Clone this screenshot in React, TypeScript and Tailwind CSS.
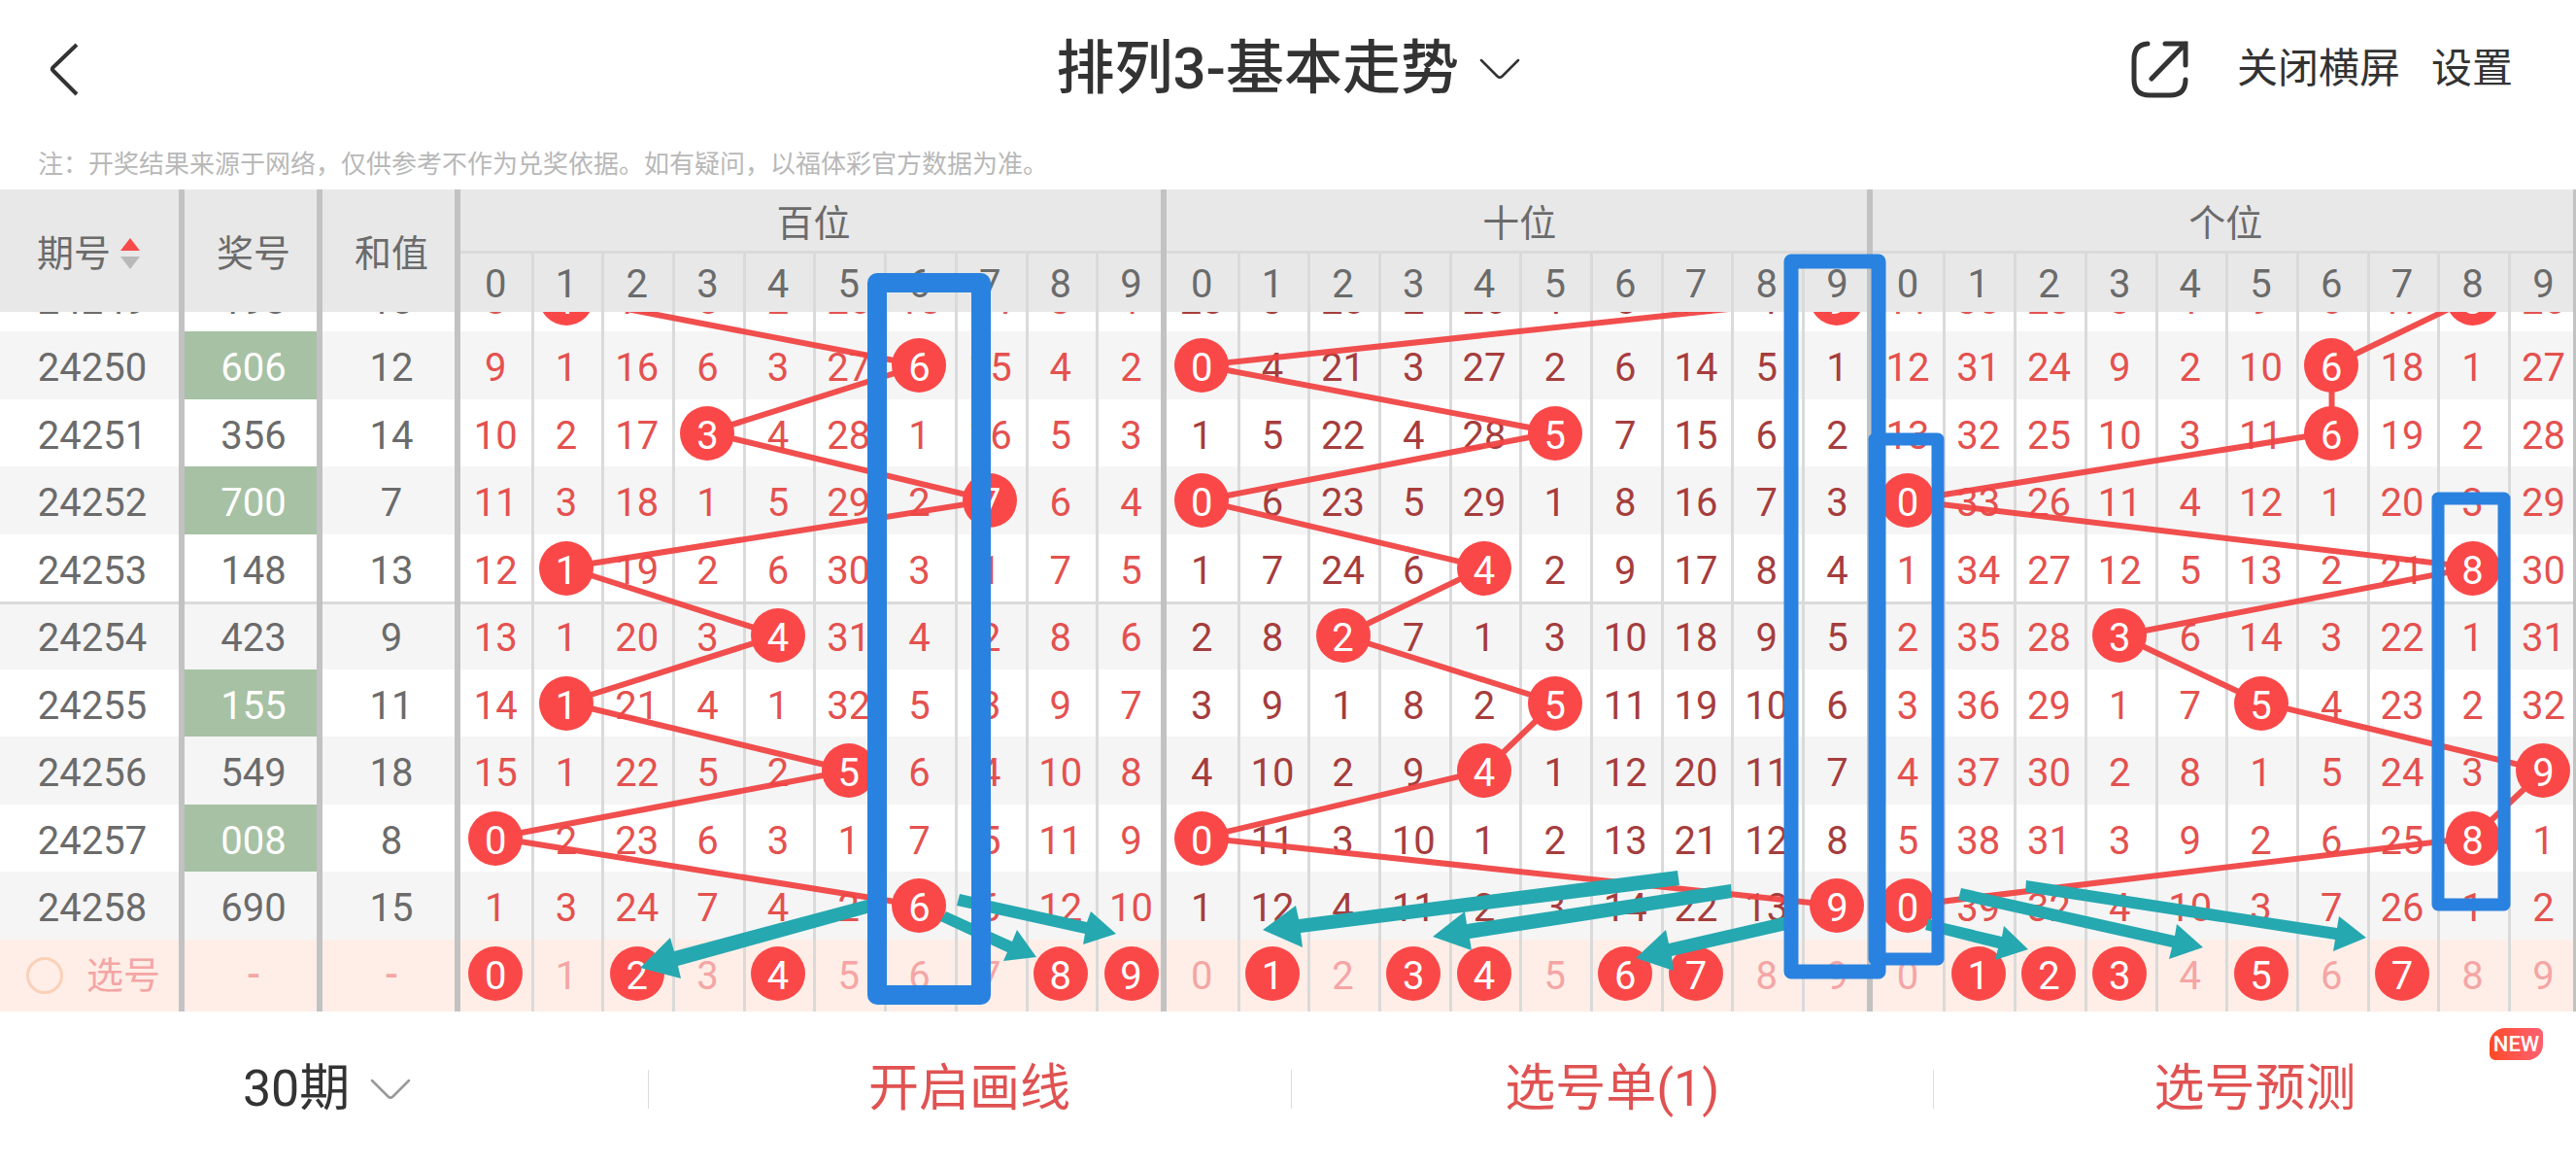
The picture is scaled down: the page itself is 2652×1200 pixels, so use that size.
import { Fragment } from 'react';

type Group = { name: string; tone: string; start: number[]; picks: number[] };
type Draw = { issue: string; num: string };

const DIGITS = [0, 1, 2, 3, 4, 5, 6, 7, 8, 9];

// start = miss counters on the first visible draw
const GROUPS: Group[] = [
  { name: '百位', tone: 'text-[#e4514f]', start: [8, 0, 15, 5, 2, 26, 18, 14, 3, 1], picks: [0, 2, 4, 8, 9] },
  { name: '十位', tone: 'text-[#a63d3d]', start: [28, 3, 20, 2, 26, 1, 5, 13, 4, 0], picks: [1, 3, 4, 6, 7] },
  { name: '个位', tone: 'text-[#e4514f]', start: [11, 30, 23, 8, 1, 9, 6, 17, 0, 26], picks: [1, 2, 3, 5, 7] },
];

const DRAWS: Draw[] = [
  { issue: '24249', num: '198' },
  { issue: '24250', num: '606' },
  { issue: '24251', num: '356' },
  { issue: '24252', num: '700' },
  { issue: '24253', num: '148' },
  { issue: '24254', num: '423' },
  { issue: '24255', num: '155' },
  { issue: '24256', num: '549' },
  { issue: '24257', num: '008' },
  { issue: '24258', num: '690' },
];

// rows alternate 69px / 70px
const ROW_CENTERS = DRAWS.map((_, i) => Math.floor(i / 2) * 139 + (i % 2 ? 69 + 35 : 34));

const ARROWS = [
  '659,996 690,965 694,979 900,924 900,938 698,994 701,1007',
  '1067,985 1047,957 1042,969 974,938 968,948 1037,980 1033,989',
  '1149,961 1123,938 1119,949 988,920 985,932 1117,961 1115,972',
  '1300,957 1334,932 1337,946 1727,896 1729,911 1339,960 1341,975',
  '1475,964 1508,938 1510,951 1782,910 1783,924 1513,966 1515,978',
  '1684,986 1715,957 1718,971 1844,942 1844,956 1721,984 1723,999',
  '2088,977 2063,953 2061,964 1985,946 1982,957 2057,976 2054,988',
  '2268,975 2241,951 2239,963 2019,914 2016,926 2236,975 2233,987',
  '2436,965 2408,943 2406,955 2086,906 2085,918 2404,967 2402,979',
];

const BOXES = [
  { x: 903, y: 291, w: 107, h: 733, s: 20 },
  { x: 1844, y: 269, w: 90, h: 731, s: 15 },
  { x: 1930, y: 452, w: 65, h: 535, s: 13 },
  { x: 2510, y: 513, w: 68, h: 418, s: 13 },
];

const sum = (num: string) => num.split('').reduce((a, b) => a + Number(b), 0);
const hasPair = (num: string) => new Set(num).size < 3;

function missAt(g: number, row: number, digit: number) {
  let miss = GROUPS[g].start[digit];
  for (let i = 0; i <= row; i++) {
    if (Number(DRAWS[i].num[g]) === digit) miss = 0;
    else if (i > 0) miss += 1;
  }
  return miss;
}

function cellLine(digit: number, ruled: boolean) {
  if (ruled) {
    if (digit === 0) return 'shadow-[inset_0_3px_0_#dadada]';
    if (digit === 9) return 'shadow-[inset_-6px_0_0_#c2c2c2,inset_3px_0_0_#dadada,inset_0_3px_0_#dadada]';
    return 'shadow-[inset_3px_0_0_#dadada,inset_0_3px_0_#dadada]';
  }
  if (digit === 0) return '';
  if (digit === 9) return 'shadow-[inset_-6px_0_0_#c2c2c2,inset_3px_0_0_#dadada]';
  return 'shadow-[inset_3px_0_0_#dadada]';
}

function Cols() {
  return (
    <colgroup>
      <col className="w-[190px]" />
      <col className="w-[142px]" />
      <col className="w-[142px]" />
      {GROUPS.map((g) => DIGITS.map((d) => <col key={g.name + d} />))}
    </colgroup>
  );
}

function Chevron({ className }: { className: string }) {
  return (
    <svg viewBox="0 0 42 22" className={`pointer-events-none h-[22px] w-[42px] ${className}`} fill="none" stroke="currentColor">
      <path d="M2 2 L18.5 18.5 Q21 21 23.5 18.5 L40 2" strokeWidth="2.5" strokeLinecap="round" />
    </svg>
  );
}

function TopBar() {
  return (
    <header className="grid h-[142px] grid-cols-[1fr_auto_1fr] items-center">
      <button aria-label="返回" className="ml-[48px] w-fit">
        <svg viewBox="0 0 34 56" className="h-[56px] w-[34px]" fill="none" stroke="#333" strokeWidth="4">
          <path d="M31 3 L6.500 26.500 Q5 28 6.500 29.500 L31 54" />
        </svg>
      </button>
      <div className="flex items-center gap-5">
        <select aria-label="走势类型" className="appearance-none bg-transparent text-[60px] leading-[80px] font-medium text-[#333]">
          <option>排列3-基本走势</option>
        </select>
        <Chevron className="text-[#333]" />
      </div>
      <div className="flex items-center justify-end pr-[65px] text-[42px] leading-[60px] text-[#333]">
        <button aria-label="分享" className="mr-[50px]">
          <svg viewBox="0 0 60 60" className="size-[60px]" fill="none" stroke="#333" strokeWidth="5" strokeLinecap="round">
            <path d="M18 4 Q4 5 4 20 V41 Q4 57 20 57 H41 Q57 57 57 41" />
            <path d="M36 4 H57 V26 M57 4 L22 40" strokeLinejoin="miter" />
          </svg>
        </button>
        <button className="mr-8">关闭横屏</button>
        <button>设置</button>
      </div>
    </header>
  );
}

function TableHead() {
  const side = 'bg-[#e8e8e8] pt-1.5 font-normal shadow-[inset_-6px_0_0_#c2c2c2]';
  return (
    <table className="relative z-20 w-full table-fixed text-[38px] leading-[50px] text-[#6b6b6b]">
      <Cols />
      <thead>
        <tr className="h-[66px]">
          <th rowSpan={2} className={side}>
            <button className="flex items-center gap-2.5 pl-[38px]">
              期号
              <svg viewBox="0 0 20 32" className="h-[32px] w-[20px]">
                <path d="M10 0 L20 13 H0 Z" fill="#f94a4a" />
                <path d="M10 32 L20 19 H0 Z" fill="#b9b9b9" />
              </svg>
            </button>
          </th>
          <th rowSpan={2} className={side}>奖号</th>
          <th rowSpan={2} className={side}>和值</th>
          {GROUPS.map((g) => (
            <th
              key={g.name}
              colSpan={10}
              className="bg-[#e8e8e8] pt-1 font-normal shadow-[inset_-6px_0_0_#c2c2c2,inset_0_-3px_0_#dadada]"
            >
              {g.name}
            </th>
          ))}
        </tr>
        <tr className="h-[60px] text-[40px]">
          {GROUPS.map((g) =>
            DIGITS.map((d) => (
              <th key={g.name + d} className={`bg-[#e8e8e8] pt-1 font-normal ${cellLine(d, false)}`}>
                {d}
              </th>
            ))
          )}
        </tr>
      </thead>
    </table>
  );
}

function TrendLines() {
  return (
    <svg
      viewBox="0 0 30 695"
      preserveAspectRatio="none"
      className="pointer-events-none absolute top-0 right-0 left-[474px] h-[695px] w-[calc(100%-474px)]"
    >
      {GROUPS.map((g, gi) => (
        <polyline
          key={g.name}
          points={DRAWS.map((d, i) => `${gi * 10 + Number(d.num[gi]) + 0.5},${ROW_CENTERS[i]}`).join(' ')}
          fill="none"
          stroke="#f04545"
          strokeOpacity="0.95"
          strokeWidth="6"
          vectorEffect="non-scaling-stroke"
        />
      ))}
    </svg>
  );
}

function TrendBody() {
  return (
    <div className="overflow-hidden">
      {/* scrolled so that the oldest draw is partly under the header */}
      <div className="relative -mt-[49px]">
        <table className="w-full table-fixed text-center text-[40px] leading-[48px] text-[#6b6b6b]">
          <Cols />
          <tbody>
            {DRAWS.map((draw, i) => {
              const ruled = draw.issue === '24254';
              const side = ruled
                ? 'shadow-[inset_-6px_0_0_#c2c2c2,inset_0_3px_0_#dadada]'
                : 'shadow-[inset_-6px_0_0_#c2c2c2]';
              return (
                <tr key={draw.issue} className={i % 2 ? 'h-[70px] bg-[#f5f5f5]' : 'h-[69px] bg-white'}>
                  <td className={`pt-1.5 ${side}`}>{draw.issue}</td>
                  <td className={`pt-1.5 ${side} ${hasPair(draw.num) ? 'bg-[#a7c1a4] text-white' : ''}`}>{draw.num}</td>
                  <td className={`pt-1.5 ${side}`}>{sum(draw.num)}</td>
                  {GROUPS.map((g, gi) =>
                    DIGITS.map((d) => {
                      const miss = missAt(gi, i, d);
                      return (
                        <td key={g.name + d} className={cellLine(d, ruled)}>
                          {miss === 0 ? (
                            <span className="relative z-10 mx-auto flex size-[56px] items-center justify-center rounded-full bg-[#fa4848] pt-1.5 text-white">
                              {d}
                            </span>
                          ) : (
                            <span className={`mx-auto flex size-[56px] items-center justify-center pt-1.5 ${g.tone}`}>{miss}</span>
                          )}
                        </td>
                      );
                    })
                  )}
                </tr>
              );
            })}
          </tbody>
          <tfoot>
            <tr className="h-[74px] bg-[#feeee7] text-[#f5a5a5]">
              <td className="shadow-[inset_-6px_0_0_#c2c2c2]">
                <label className="flex items-center gap-6 pl-[27px] text-[38px]">
                  <input type="radio" className="size-[38px] appearance-none rounded-full border-3 border-[#fad0b8]" />
                  选号
                </label>
              </td>
              <td className="font-medium shadow-[inset_-6px_0_0_#c2c2c2]">-</td>
              <td className="font-medium shadow-[inset_-6px_0_0_#c2c2c2]">-</td>
              {GROUPS.map((g) =>
                DIGITS.map((d) => (
                  <td key={g.name + d} className={`pb-1 ${cellLine(d, false)}`}>
                    <button
                      className={`mx-auto flex size-[56px] items-center justify-center rounded-full pt-1.5 ${
                        g.picks.includes(d) ? 'bg-[#fa4848] text-white' : ''
                      }`}
                    >
                      {d}
                    </button>
                  </td>
                ))
              )}
            </tr>
          </tfoot>
        </table>
        <TrendLines />
      </div>
    </div>
  );
}

function Marks() {
  return (
    <svg
      viewBox="0 195 2655 846"
      preserveAspectRatio="none"
      className="pointer-events-none absolute inset-0 z-30 h-full w-full"
    >
      {ARROWS.map((points) => (
        <polygon key={points} points={points} fill="#26a8b0" />
      ))}
      {BOXES.map((b) => (
        <rect
          key={b.x}
          x={b.x}
          y={b.y}
          width={b.w}
          height={b.h}
          fill="none"
          stroke="#2a82e0"
          strokeWidth={b.s}
          strokeLinejoin="round"
        />
      ))}
    </svg>
  );
}

function BottomBar() {
  const actions = ['开启画线', '选号单(1)', '选号预测'];
  return (
    <nav className="flex h-[159px] items-center text-[52px] leading-[70px]">
      <div className="flex flex-1 items-center justify-center gap-5 pl-1.5">
        <select aria-label="期数" className="appearance-none bg-transparent text-[#333]">
          <option>30期</option>
        </select>
        <Chevron className="text-[#999]" />
      </div>
      {actions.map((name, i) => (
        <Fragment key={name}>
          <span className="h-[40px] w-px bg-[#dcdcdc]" />
          <button className="relative h-full flex-1 text-[#e05252]">
            {name}
            {i === 2 && (
              <span className="absolute top-[17px] right-[34px] flex h-[33px] w-[55px] items-center justify-center rounded-tl-[16px] rounded-tr-[6px] rounded-br-[16px] rounded-bl-[6px] bg-gradient-to-r from-[#ff4a20] to-[#ff6070] text-[22px] leading-[33px] font-medium text-white">
                NEW
              </span>
            )}
          </button>
        </Fragment>
      ))}
    </nav>
  );
}

export default function App() {
  return (
    <div className="min-h-screen overflow-hidden bg-white font-['Roboto','Noto_Sans_CJK_SC',sans-serif]">
      <TopBar />
      <p className="flex h-[53px] items-center pl-[39px] text-[26px] leading-[36px] text-[#b8b8b8]">
        注：开奖结果来源于网络，仅供参考不作为兑奖依据。如有疑问，以福体彩官方数据为准。
      </p>
      {/* last divider runs slightly past the right edge */}
      <main className="relative -mr-[3px]">
        <TableHead />
        <TrendBody />
        <Marks />
      </main>
      <BottomBar />
    </div>
  );
}
